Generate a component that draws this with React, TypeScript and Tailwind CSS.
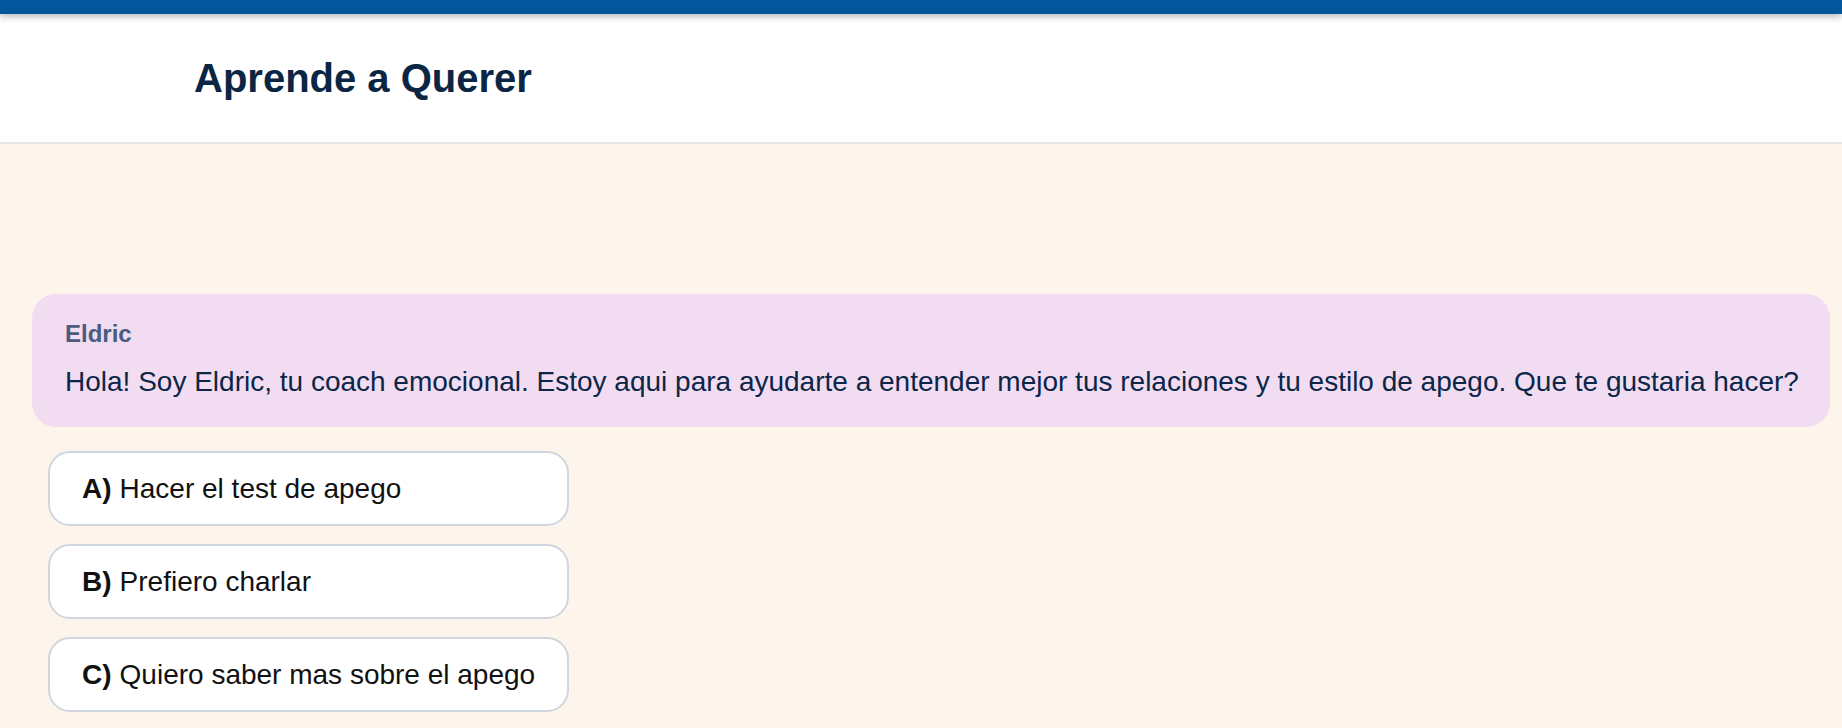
const OPTIONS = [
  { key: "A", label: "Hacer el test de apego" },
  { key: "B", label: "Prefiero charlar" },
  { key: "C", label: "Quiero saber mas sobre el apego" },
];

export default function App() {
  return (
    <div className="flex h-[728px] flex-col overflow-hidden bg-[#fdf5eb] font-['Liberation_Sans',Arial,sans-serif]">
      <div className="relative z-10 h-[14px] shrink-0 bg-[#03559c] shadow-[0_3px_6px_rgba(0,0,0,0.25)]" />
      <header className="flex h-[130px] shrink-0 items-center border-b-2 border-[#e6e6ea] bg-white pl-[194px]">
        <h1 className="text-[40px] font-bold text-[#0b2545]">Aprende a Querer</h1>
      </header>
      <main className="flex shrink-0 flex-col pt-[150px]">
        <div className="ml-[32px] mr-[12px] rounded-[24px] bg-[#f2dcf1] pb-[24px] pl-[33px] pr-[16px] pt-[26px]">
          <div className="text-[24px] font-bold leading-[28px] text-[#4a5b7d]">Eldric</div>
          <p className="mt-[13px] whitespace-nowrap text-[28px] leading-[42px] text-[#0c2649]">
            Hola! Soy Eldric, tu coach emocional. Estoy aqui para ayudarte a entender mejor tus relaciones y tu estilo de apego. Que te gustaria hacer?
          </p>
        </div>
        <div className="ml-[48px] mt-[24px] flex flex-col gap-[18px]">
          {OPTIONS.map((o) => (
            <button
              key={o.key}
              className="flex h-[75px] w-[521px] items-center whitespace-nowrap rounded-[22px] border-2 border-[#cfd6df] bg-white px-[32px] text-left text-[28px] text-[#111111]"
            >
              <span className="font-bold">{o.key})</span>
              <span className="ml-[8px]">{o.label}</span>
            </button>
          ))}
        </div>
      </main>
    </div>
  );
}
